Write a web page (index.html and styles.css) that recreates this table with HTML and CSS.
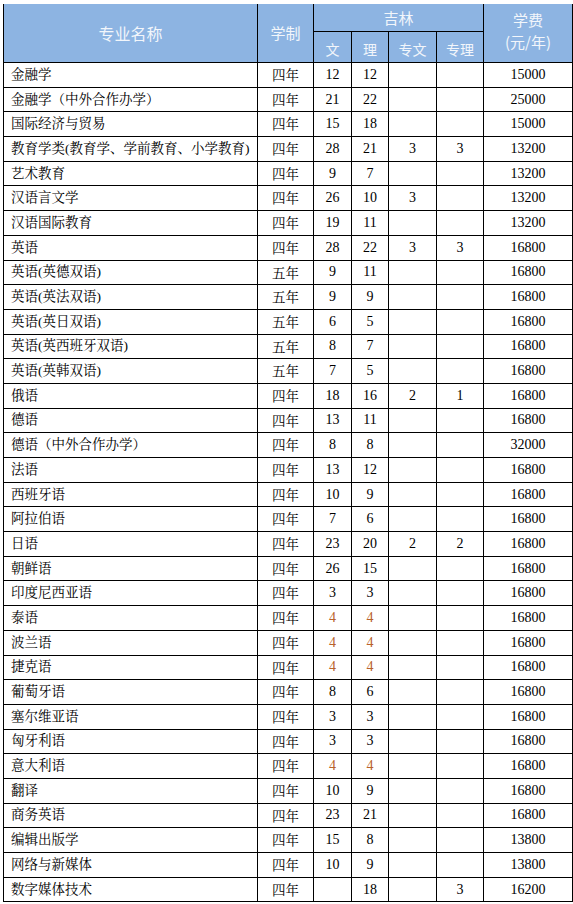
FILE: index.html
```html
<!DOCTYPE html>
<html lang="zh">
<head>
<meta charset="utf-8">
<title>专业学费表</title>
<link rel="stylesheet" href="styles.css">
</head>
<body>
<div class="page">
<table class="fees">
<colgroup>
<col class="c-name"><col class="c-len"><col class="c-n1"><col class="c-n2"><col class="c-n3"><col class="c-n4"><col class="c-fee">
</colgroup>
<thead>
<tr class="h1">
<th rowspan="2" class="hname">专业名称</th>
<th rowspan="2" class="hlen">学制</th>
<th colspan="4" class="hreg">吉林</th>
<th rowspan="2" class="hfee">学费<br>(元/年)</th>
</tr>
<tr class="h2">
<th>文</th><th>理</th><th>专文</th><th>专理</th>
</tr>
</thead>
<tbody>
<tr><td class="name">金融学</td><td class="len">四年</td><td>12</td><td>12</td><td></td><td></td><td>15000</td></tr>
<tr><td class="name">金融学（中外合作办学）</td><td class="len">四年</td><td>21</td><td>22</td><td></td><td></td><td>25000</td></tr>
<tr><td class="name">国际经济与贸易</td><td class="len">四年</td><td>15</td><td>18</td><td></td><td></td><td>15000</td></tr>
<tr><td class="name">教育学类(教育学、学前教育、小学教育)</td><td class="len">四年</td><td>28</td><td>21</td><td>3</td><td>3</td><td>13200</td></tr>
<tr><td class="name">艺术教育</td><td class="len">四年</td><td>9</td><td>7</td><td></td><td></td><td>13200</td></tr>
<tr><td class="name">汉语言文学</td><td class="len">四年</td><td>26</td><td>10</td><td>3</td><td></td><td>13200</td></tr>
<tr><td class="name">汉语国际教育</td><td class="len">四年</td><td>19</td><td>11</td><td></td><td></td><td>13200</td></tr>
<tr><td class="name">英语</td><td class="len">四年</td><td>28</td><td>22</td><td>3</td><td>3</td><td>16800</td></tr>
<tr><td class="name">英语(英德双语)</td><td class="len">五年</td><td>9</td><td>11</td><td></td><td></td><td>16800</td></tr>
<tr><td class="name">英语(英法双语)</td><td class="len">五年</td><td>9</td><td>9</td><td></td><td></td><td>16800</td></tr>
<tr><td class="name">英语(英日双语)</td><td class="len">五年</td><td>6</td><td>5</td><td></td><td></td><td>16800</td></tr>
<tr><td class="name">英语(英西班牙双语)</td><td class="len">五年</td><td>8</td><td>7</td><td></td><td></td><td>16800</td></tr>
<tr><td class="name">英语(英韩双语)</td><td class="len">五年</td><td>7</td><td>5</td><td></td><td></td><td>16800</td></tr>
<tr><td class="name">俄语</td><td class="len">四年</td><td>18</td><td>16</td><td>2</td><td>1</td><td>16800</td></tr>
<tr><td class="name">德语</td><td class="len">四年</td><td>13</td><td>11</td><td></td><td></td><td>16800</td></tr>
<tr><td class="name">德语（中外合作办学）</td><td class="len">四年</td><td>8</td><td>8</td><td></td><td></td><td>32000</td></tr>
<tr><td class="name">法语</td><td class="len">四年</td><td>13</td><td>12</td><td></td><td></td><td>16800</td></tr>
<tr><td class="name">西班牙语</td><td class="len">四年</td><td>10</td><td>9</td><td></td><td></td><td>16800</td></tr>
<tr><td class="name">阿拉伯语</td><td class="len">四年</td><td>7</td><td>6</td><td></td><td></td><td>16800</td></tr>
<tr><td class="name">日语</td><td class="len">四年</td><td>23</td><td>20</td><td>2</td><td>2</td><td>16800</td></tr>
<tr><td class="name">朝鲜语</td><td class="len">四年</td><td>26</td><td>15</td><td></td><td></td><td>16800</td></tr>
<tr><td class="name">印度尼西亚语</td><td class="len">四年</td><td>3</td><td>3</td><td></td><td></td><td>16800</td></tr>
<tr><td class="name">泰语</td><td class="len">四年</td><td class="hl">4</td><td class="hl">4</td><td></td><td></td><td>16800</td></tr>
<tr><td class="name">波兰语</td><td class="len">四年</td><td class="hl">4</td><td class="hl">4</td><td></td><td></td><td>16800</td></tr>
<tr><td class="name">捷克语</td><td class="len">四年</td><td class="hl">4</td><td class="hl">4</td><td></td><td></td><td>16800</td></tr>
<tr><td class="name">葡萄牙语</td><td class="len">四年</td><td>8</td><td>6</td><td></td><td></td><td>16800</td></tr>
<tr><td class="name">塞尔维亚语</td><td class="len">四年</td><td>3</td><td>3</td><td></td><td></td><td>16800</td></tr>
<tr><td class="name">匈牙利语</td><td class="len">四年</td><td>3</td><td>3</td><td></td><td></td><td>16800</td></tr>
<tr><td class="name">意大利语</td><td class="len">四年</td><td class="hl">4</td><td class="hl">4</td><td></td><td></td><td>16800</td></tr>
<tr><td class="name">翻译</td><td class="len">四年</td><td>10</td><td>9</td><td></td><td></td><td>16800</td></tr>
<tr><td class="name">商务英语</td><td class="len">四年</td><td>23</td><td>21</td><td></td><td></td><td>16800</td></tr>
<tr><td class="name">编辑出版学</td><td class="len">四年</td><td>15</td><td>8</td><td></td><td></td><td>13800</td></tr>
<tr><td class="name">网络与新媒体</td><td class="len">四年</td><td>10</td><td>9</td><td></td><td></td><td>13800</td></tr>
<tr><td class="name">数字媒体技术</td><td class="len">四年</td><td></td><td>18</td><td></td><td>3</td><td>16200</td></tr>
</tbody>
</table>
</div>
</body>
</html>
```
FILE: styles.css
```css
html, body {
  margin: 0;
  padding: 0;
  background: #ffffff;
}
.page {
  padding: 4px 0 0 3px;
}
.fees {
  border-collapse: collapse;
  table-layout: fixed;
  width: 569px;
  font-family: "Liberation Serif", "Noto Serif CJK SC", "Noto Sans CJK SC", serif;
  font-size: 14px;
  color: #000;
}
.c-name { width: 254px; }
.c-len { width: 56px; }
.c-n1 { width: 38px; }
.c-n2 { width: 37px; }
.c-n3 { width: 48px; }
.c-n4 { width: 47px; }
.c-fee { width: 89px; }

.fees th {
  background: #8db4e2;
  color: #f2f6fb;
  font-family: "Noto Sans CJK SC", sans-serif;
  font-weight: normal;
  font-size: 15px;
  border: 1px solid #000;
  padding: 0;
  height: 27px;
  line-height: 20px;
  text-align: center;
  vertical-align: middle;
}
.fees thead tr.h1 th {
  border-top: none;
}
.fees th.hname {
  font-size: 16px;
}
.fees .h2 th {
  font-size: 14px;
  padding-top: 3px;
}
.fees th.hfee {
  line-height: 22px;
  padding-bottom: 4px;
}
.fees td {
  border: 1px solid #000;
  height: 23.7px;
  padding: 0;
  text-align: center;
  vertical-align: middle;
  line-height: 18px;
}
.fees td.name {
  text-align: left;
  padding-left: 7px;
  font-family: "Noto Serif CJK SC", "Noto Sans CJK SC", "Liberation Serif", sans-serif;
  font-size: 13.5px;
  white-space: nowrap;
}
.fees td.name {
  font-family: "Liberation Serif", "Noto Serif CJK SC", "Noto Sans CJK SC", serif;
}
.fees td.len {
  font-family: "Noto Serif CJK SC", "Noto Sans CJK SC", sans-serif;
  font-size: 13.5px;
  vertical-align: top;
  padding-top: 2px;
  height: 21.7px;
}
.fees td.hl {
  color: #b8622b;
}
```
